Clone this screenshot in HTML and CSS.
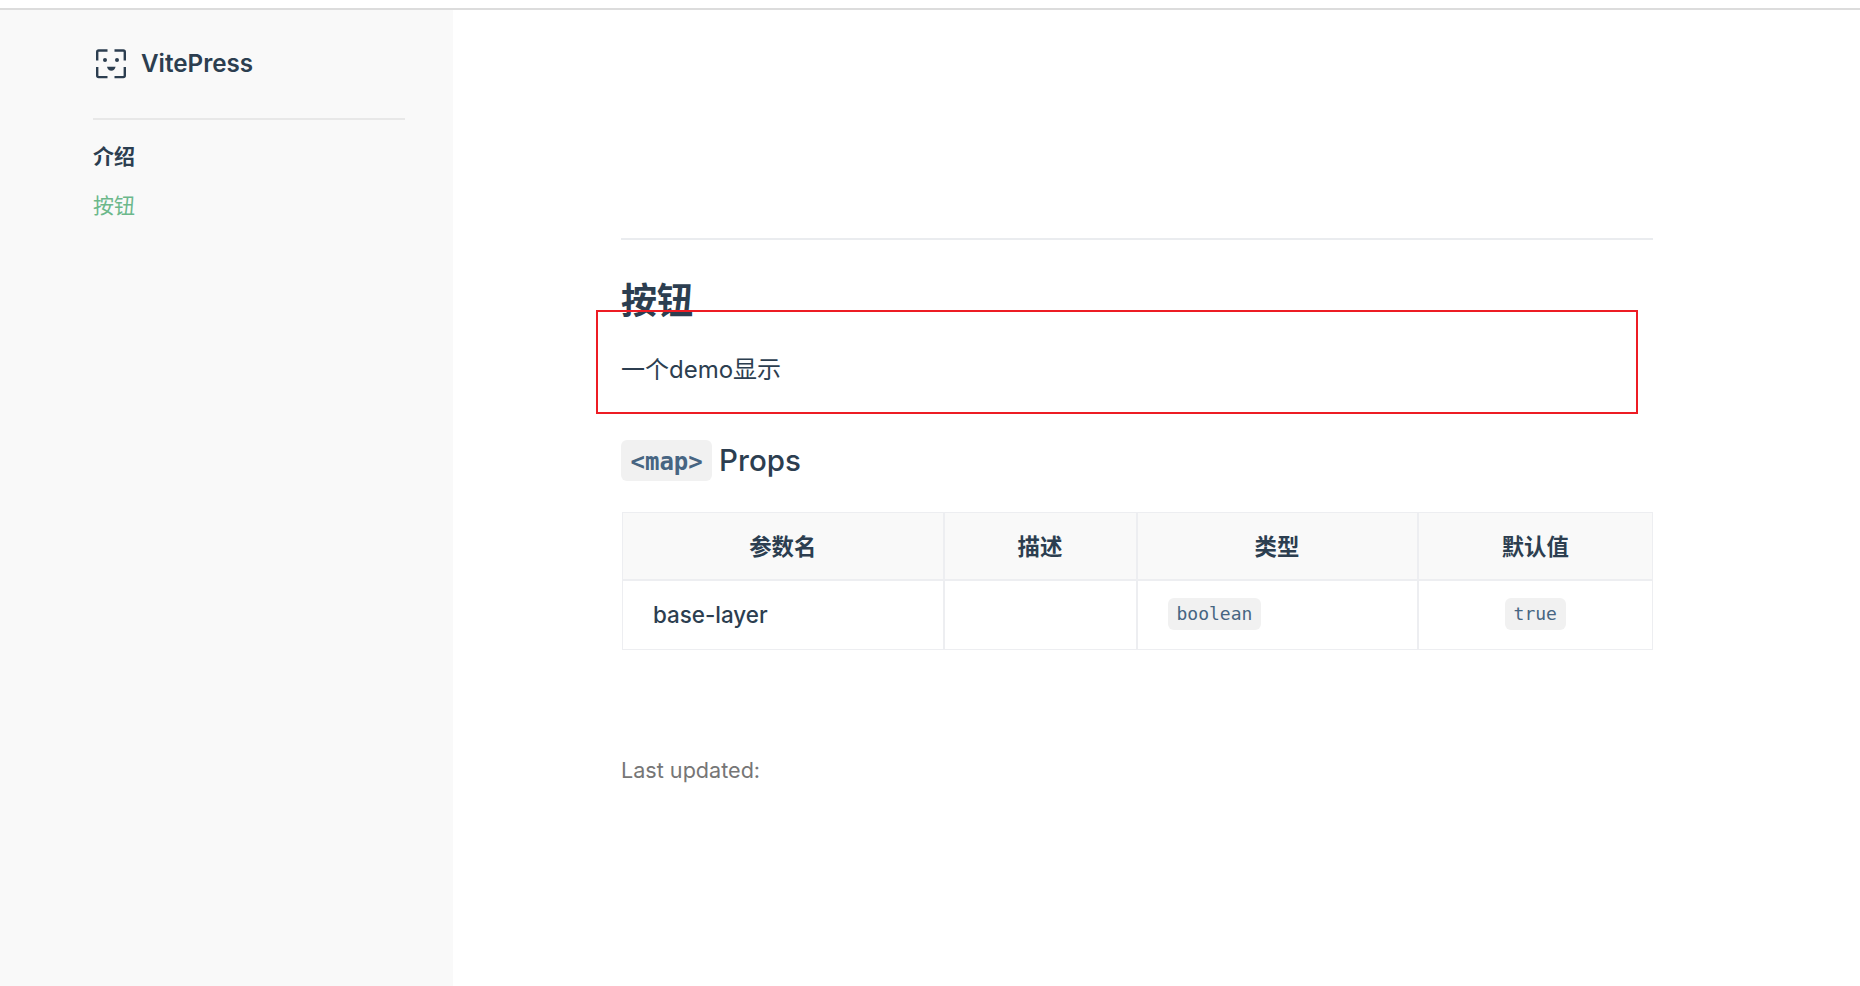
FILE: index.html
```html
<!DOCTYPE html>
<html lang="zh">
<head>
<meta charset="utf-8">
<title>按钮 | VitePress</title>
<link rel="stylesheet" href="styles.css">
</head>
<body>
<div class="topline"></div>
<div class="app">
  <aside class="sidebar">
    <a class="brand" href="#">
      <svg class="logo" width="32" height="32" viewBox="0 0 32 32" fill="none" stroke="#2c3e50" stroke-width="2.400" stroke-linejoin="round">
        <path d="M2.200 12.500V4q0-1.500 1.500-1.500H12.500"/>
        <path d="M19.500 2.500h8.800q1.500 0 1.500 1.500V12.500"/>
        <path d="M2.200 19v8.600q0 1.500 1.500 1.500H12.500"/>
        <path d="M29.800 19v8.600q0 1.500-1.500 1.500H19.500"/>
        <circle cx="10" cy="12" r="2" fill="#2c3e50" stroke="none"/>
        <circle cx="22" cy="12" r="2" fill="#2c3e50" stroke="none"/>
        <path d="M12 18.800h8.600q-1 3.900-4.300 3.900t-4.300-3.900z" fill="#2c3e50" stroke="none"/>
      </svg>
      <span class="brand-name">VitePress</span>
    </a>
    <nav class="nav">
      <a class="nav-title" href="#">介绍</a>
      <a class="nav-link" href="#">按钮</a>
    </nav>
  </aside>
  <main class="main">
    <div class="doc">
      <hr class="rule">
      <h1 class="title">按钮</h1>
      <p class="lead">一个demo显示</p>
      <h2 class="subtitle"><code class="tag">&lt;map&gt;</code> Props</h2>
      <table class="props">
        <colgroup>
          <col class="c1"><col class="c2"><col class="c3"><col class="c4">
        </colgroup>
        <thead>
          <tr><th>参数名</th><th>描述</th><th>类型</th><th>默认值</th></tr>
        </thead>
        <tbody>
          <tr>
            <td>base-layer</td>
            <td></td>
            <td><code class="pill">boolean</code></td>
            <td class="center"><code class="pill">true</code></td>
          </tr>
        </tbody>
      </table>
      <div class="updated">Last updated:</div>
    </div>
  </main>
</div>
<div class="annotation"></div>
</body>
</html>
```
FILE: styles.css
```css
* { box-sizing: border-box; }
html, body { margin: 0; height: 100%; }
body {
  background: #fff;
  color: #2c3e50;
  font-family: Inter, "Noto Sans CJK SC", sans-serif;
  overflow: hidden;
}
a { color: inherit; text-decoration: none; }
.topline { height: 10px; background: #fff; border-bottom: 2px solid #dcdcdc; }
.app { display: flex; height: 976px; }
.sidebar {
  width: 453px;
  flex: none;
  background: #f9f9f9;
  padding: 0 48px 0 93px;
}
.brand {
  display: flex;
  align-items: center;
  height: 110px;
  border-bottom: 2px solid #e8e8e8;
  padding: 0 0 0 2px;
  gap: 14px;
}
.logo { flex: none; }
.brand-name { font-size: 24.200px; font-weight: 600; line-height: 32px; }
.nav { display: flex; flex-direction: column; }
.nav-title { font-size: 21px; font-weight: 700; line-height: 32px; margin-top: 21px; }
.nav-link { font-size: 21px; font-weight: 400; line-height: 32px; margin-top: 17px; color: #6cb88b; }
.main { flex: 1; padding-left: 168px; }
.doc { width: 1032px; }
.rule { height: 2px; margin: 228px 0 0; border: 0; background: #eaecef; }
.title { font-size: 36px; font-weight: 700; line-height: 54px; margin: 34px 0 0; }
.lead { font-size: 24px; line-height: 36px; margin: 23.500px 0 0; font-weight: 400; }
.subtitle { font-size: 29.500px; font-weight: 550; line-height: 40px; margin: 52.500px 0 0; word-spacing: -1px; }
.tag {
  display: inline-block;
  font-family: "DejaVu Sans Mono", monospace;
  font-size: 24px;
  font-weight: 700;
  line-height: 37px;
  padding: 4px 9.500px 0;
  background: #f1f1f1;
  border-radius: 6px;
  color: #476582;
  vertical-align: top;
}
.props {
  width: 1030px;
  margin: 31px 0 0 1px;
  table-layout: fixed;
  border-collapse: collapse;
  font-size: 22.400px;
}
.c1 { width: 321px; }
.c2 { width: 193px; }
.c3 { width: 281px; }
.c4 { width: 235px; }
.props th, .props td { border: 2px solid #edeef1; padding: 0 30px; }
.props th { height: 67px; padding-bottom: 2px; background: #f9f9f9; font-weight: 700; text-align: center; border-top-width: 1px; }
.props td { height: 70px; padding-bottom: 1px; font-weight: 500; border-bottom-width: 1px; }
.props th:first-child, .props td:first-child { border-left-width: 1px; }
.props th:last-child, .props td:last-child { border-left-width: 1px; border-right-width: 1px; }
.props .center { text-align: center; }
.pill {
  display: inline-block;
  font-family: "DejaVu Sans Mono", monospace;
  font-size: 18px;
  font-weight: 400;
  line-height: 32px;
  padding: 0 9px;
  background: #f1f1f1;
  border-radius: 6px;
  color: #476582;
  vertical-align: middle;
}
.updated { font-size: 21.600px; line-height: 32px; margin-top: 104px; color: #767676; font-weight: 400; }
.annotation {
  position: absolute;
  left: 596px;
  top: 310px;
  width: 1042px;
  height: 104px;
  border: 2px solid #ed1c24;
  pointer-events: none;
}
```
